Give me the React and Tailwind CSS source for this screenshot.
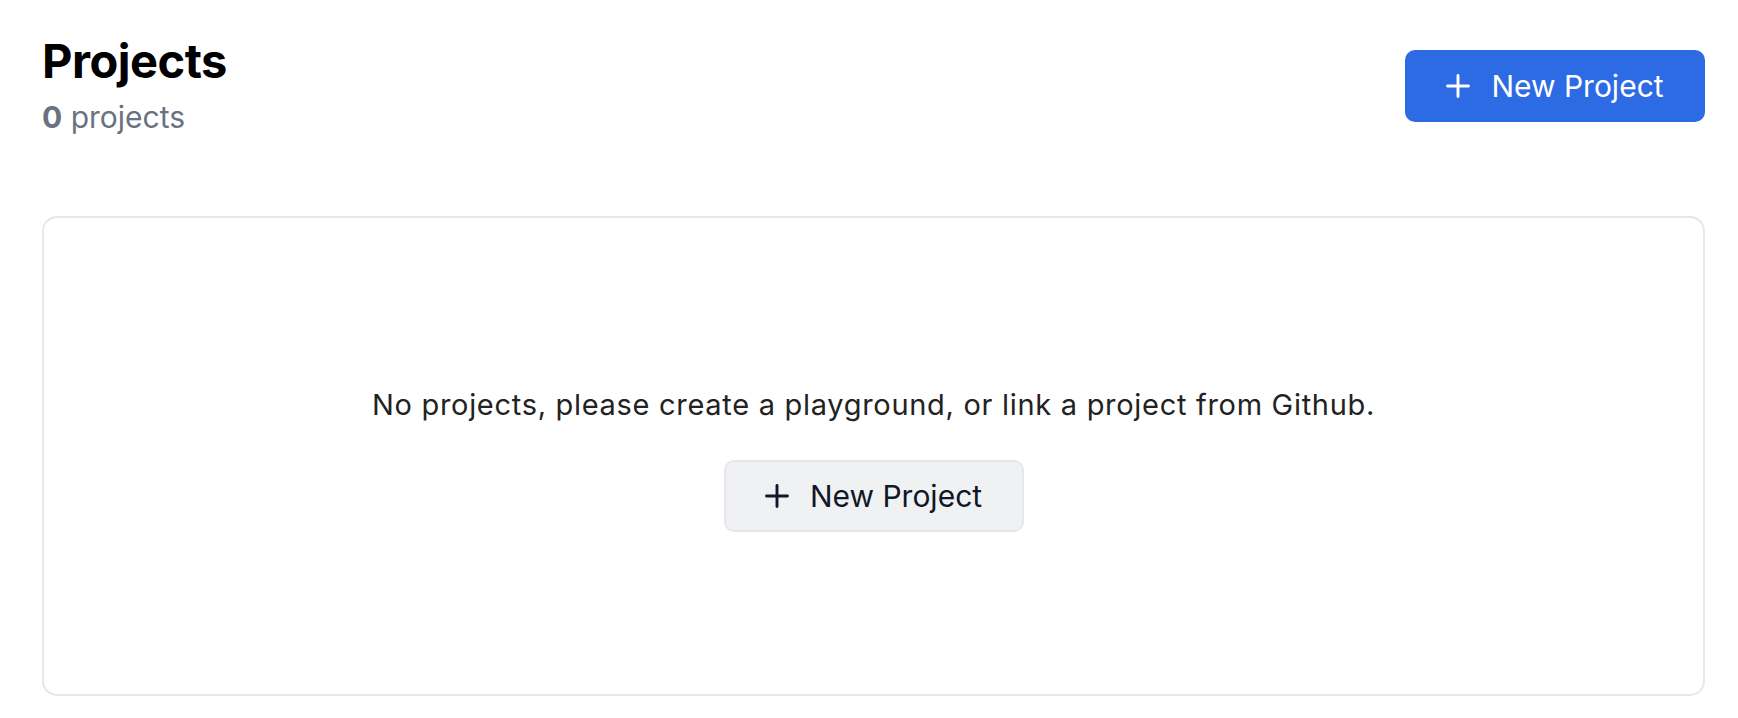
function PlusIcon({ className }) {
  return (
    <svg viewBox="0 0 24 24" className={className} fill="none" stroke="currentColor" strokeWidth="2.9" strokeLinecap="round">
      <path d="M12 1.5v21M1.5 12h21" />
    </svg>
  )
}

function App() {
  return (
    <div className="bg-white pl-[42px] pr-[33px] pb-[22px] font-['Inter',sans-serif]">
      <div className="flex items-start justify-between">
        <div className="pt-[31px]">
          <h1 className="text-[47px] leading-[60px] font-bold text-black tracking-[-0.5px]">Projects</h1>
          <p className="mt-[8px] text-[30px] leading-[36px] text-gray-500">
            <span className="font-bold">0</span> projects
          </p>
        </div>
        <button className="mt-[50px] flex h-[72px] w-[300px] items-center justify-center gap-[21px] rounded-[10px] bg-[#2d6be4] text-[30px] text-white">
          <PlusIcon className="h-[24px] w-[24px]" />
          <span>New Project</span>
        </button>
      </div>

      <div className="mt-[81px] flex h-[480px] flex-col items-center justify-center rounded-[15px] border-2 border-[#e5e7eb] pt-[7px]">
        <p className="text-[29px] leading-[36px] tracking-[0.7px] text-[#222222]">
          No projects, please create a playground, or link a project from Github.
        </p>
        <button className="mt-[37px] flex h-[72px] w-[300px] items-center justify-center gap-[21px] rounded-[10px] border-2 border-[#e5e7eb] bg-[#f0f1f3] text-[30px] text-gray-900">
          <PlusIcon className="h-[24px] w-[24px]" />
          <span>New Project</span>
        </button>
      </div>
    </div>
  )
}

export default App
